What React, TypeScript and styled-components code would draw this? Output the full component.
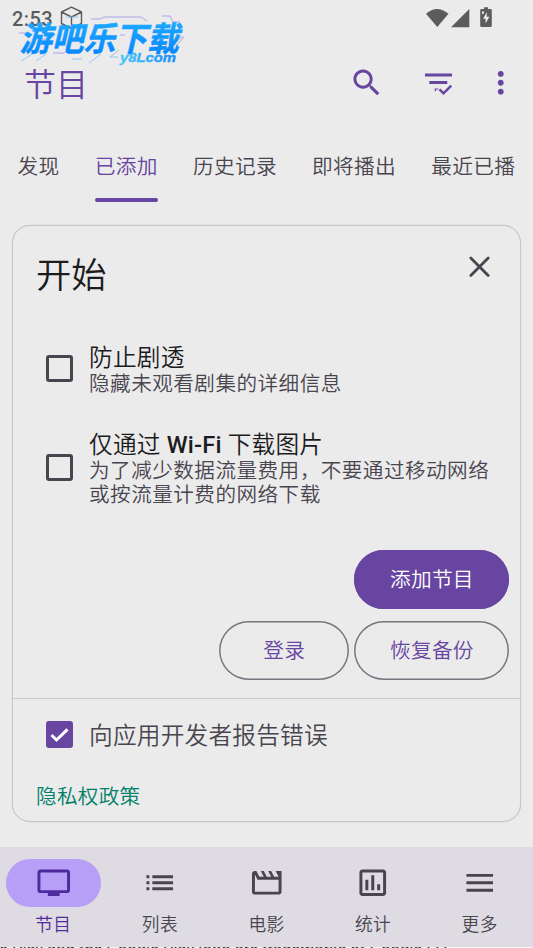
import React from 'react';
import styled, { createGlobalStyle } from 'styled-components';

const purple = '#6745a0';
const ink = '#1c1b1e';
const muted = '#49454f';
const surface = '#ebebeb';
const outline = '#c9c5d0';

const GlobalStyle = createGlobalStyle`
  * { box-sizing: border-box; }
  body {
    margin: 0;
    background: ${surface};
    font-family: Roboto, "Noto Sans CJK SC", sans-serif;
    font-weight: 350;
    overflow: hidden;
  }
  button { font: inherit; background: none; border: 0; padding: 0; }
`;

const Screen = styled.div`
  position: relative;
  display: flex;
  flex-direction: column;
  width: 533px;
  height: 948px;
  overflow: hidden;
  background: ${surface};
`;

const StatusBar = styled.header`
  display: flex;
  align-items: center;
  height: 36px;
  padding: 0 40px 0 12px;
  color: #5c5c5c;
`;

const Clock = styled.span`
  width: 48px;
  font-size: 20px;
  font-weight: 500;
  line-height: 24px;
  letter-spacing: 0.4px;
  padding-top: 1px;
`;

const StatusIcons = styled.div`
  display: flex;
  margin-left: auto;
`;

const AppBar = styled.div`
  display: flex;
  align-items: center;
  height: 94px;
  padding: 0 15px 0 24px;
  color: ${purple};
`;

const Title = styled.h1`
  margin: 0 auto 0 0;
  padding-top: 3px;
  font-size: 32px;
  font-weight: inherit;
  line-height: 44px;
`;

const IconButton = styled.button<{ $gap?: number }>`
  display: flex;
  margin-left: ${p => p.$gap ?? 0}px;
  color: inherit;
`;

const Tabs = styled.nav`
  display: flex;
  height: 72px;
  white-space: nowrap;
`;

const Tab = styled.button<{ $active?: boolean }>`
  display: flex;
  flex: none;
  flex-direction: column;
  justify-content: space-between;
  margin: 0 17.6px;
  padding-top: 23px;
  font-size: 20.7px;
  line-height: 28px;
  letter-spacing: 0.3px;
  color: ${p => (p.$active ? purple : muted)};
  &::after {
    content: '';
    width: 100%;
    height: 4.5px;
    border-radius: 3px;
    background: ${p => (p.$active ? purple : 'transparent')};
  }
`;

const Card = styled.section`
  display: flex;
  flex-direction: column;
  height: 597px;
  margin: 23px 12px 0;
  border: 1px solid ${outline};
  border-radius: 18px;
  background: ${surface};
  box-shadow: 0 0 0 0.2px ${outline};
`;

const CardHead = styled.div`
  display: flex;
  justify-content: space-between;
  height: 105px;
  padding: 23px 23px 0 23px;
  color: ${ink};
`;

const Heading = styled.h2`
  margin: 2px 0 0;
  font-size: 35.3px;
  font-weight: inherit;
  line-height: 50px;
`;

const CloseButton = styled(IconButton)`
  align-self: flex-start;
  color: ${muted};
`;

const Option = styled.label<{ $height: number }>`
  display: flex;
  align-items: center;
  height: ${p => p.$height}px;
  padding-left: 33px;
`;

const Box = styled.span<{ $checked?: boolean }>`
  display: flex;
  flex: none;
  width: 27px;
  height: 27px;
  margin-right: 16px;
  border: 3px solid ${p => (p.$checked ? purple : muted)};
  border-radius: 3px;
  background: ${p => (p.$checked ? purple : 'transparent')};
  svg { margin: -3px; }
`;

const OptionText = styled.span`
  display: flex;
  flex-direction: column;
  padding-top: 3px;
`;

const OptionTitle = styled.span`
  font-size: 23.7px;
  line-height: 28px;
  letter-spacing: 0.2px;
  color: ${ink};
`;

const OptionNote = styled.span`
  font-size: 20.6px;
  line-height: 24.5px;
  letter-spacing: 0.47px;
  color: ${muted};
  white-space: pre-line;
`;

const Latin = styled.b`
  font-weight: 500;
`;

const Actions = styled.div`
  display: grid;
  grid-template-columns: 130.5px 155px;
  grid-auto-rows: 59px;
  justify-content: end;
  gap: 12px 5px;
  margin: 21px 10.6px 0 0;
`;

const Pill = styled.button<{ $filled?: boolean }>`
  grid-column: ${p => (p.$filled ? 2 : 'auto')};
  border-radius: 30px;
  background: ${p => (p.$filled ? purple : 'transparent')};
  box-shadow: inset 0 0 0 1.5px ${p => (p.$filled ? purple : '#7a757f')};
  color: ${p => (p.$filled ? '#fff' : purple)};
  font-size: 20.7px;
  line-height: 28px;
  letter-spacing: 0.25px;
  padding-top: 1px;
`;

const CardFoot = styled.div`
  margin-top: 18px;
  border-top: 1px solid #cbc9ce;
`;

const ReportLabel = styled.span`
  padding-top: 2px;
  font-size: 23.7px;
  line-height: 30px;
  letter-spacing: 0.2px;
  color: ${muted};
`;

const PolicyLink = styled.a`
  display: block;
  padding: 12px 0 0 23px;
  font-size: 20.6px;
  line-height: 30px;
  letter-spacing: 0.3px;
  color: #008069;
`;

const BottomNav = styled.nav`
  display: grid;
  grid-template-columns: repeat(5, 1fr);
  height: 100px;
  margin-top: auto;
  background: #dedbe2;
`;

const NavItem = styled.button<{ $active?: boolean }>`
  display: flex;
  flex-direction: column;
  align-items: center;
  padding-top: 12px;
  color: ${p => (p.$active ? '#4f2a9c' : muted)};
`;

const NavIcon = styled.span<{ $active?: boolean }>`
  display: grid;
  place-items: center;
  width: 95px;
  height: 48px;
  border-radius: 24px;
  background: ${p => (p.$active ? '#b79ff8' : 'transparent')};
`;

const NavLabel = styled.span`
  margin-top: 6px;
  font-size: 17.7px;
  line-height: 24px;
  letter-spacing: 0.4px;
`;

const LegalStrip = styled.footer`
  flex: none;
  height: 1px;
  overflow: hidden;
  background: #f4f4f4;
  color: #333;
  font-size: 16.6px;
  font-weight: 400;
  line-height: 6px;
  white-space: nowrap;
  text-indent: -5px;
`;

const Watermark = styled.svg`
  position: absolute;
  left: 15px;
  top: 12px;
`;

const Glyph = ({ d, size = 35.5 }: { d: string; size?: number }) => (
  <svg width={size} height={size} viewBox="0 0 24 24" fill="currentColor" fillRule="evenodd">
    <path d={d} />
  </svg>
);

const icons = {
  search:
    'M15.5 14h-.79l-.28-.27C15.41 12.59 16 11.11 16 9.5 16 5.91 13.09 3 9.5 3S3 5.91 3 9.5 5.91 16 9.5 16c1.61 0 3.09-.59 4.23-1.57l.27.28v.79l5 4.99L20.49 19l-4.99-5zm-6 0C7.01 14 5 11.99 5 9.5S7.01 5 9.5 5 14 7.01 14 9.5 11.99 14 9.5 14z',
  more: 'M12 8c1.1 0 2-.9 2-2s-.9-2-2-2-2 .9-2 2 .9 2 2 2zm0 2c-1.1 0-2 .9-2 2s.9 2 2 2 2-.9 2-2-.9-2-2-2zm0 6c-1.1 0-2 .9-2 2s.9 2 2 2 2-.9 2-2-.9-2-2-2z',
  tv: 'M21 3H3c-1.1 0-2 .9-2 2v12c0 1.1.9 2 2 2h5v2h8v-2h5c1.1 0 2-.9 2-2V5c0-1.1-.9-2-2-2zm0 14H3V5h18v12z',
  list: 'M3 9h2V7H3v2zm0 4h2v-2H3v2zm0 4h2v-2H3v2zM7 7v2h14V7H7zm0 6h14v-2H7v2zm0 4h14v-2H7v2z',
  movie:
    'M4 6.47L5.76 10H20v8H4V6.47M22 4h-4l2 4h-3l-2-4h-2l2 4h-3l-2-4H8l2 4H7L5 4H4c-1.1 0-1.99.9-1.99 2L2 18c0 1.1.9 2 2 2h16c1.1 0 2-.9 2-2V4z',
  stats:
    'M19 3H5c-1.1 0-2 .9-2 2v14c0 1.1.9 2 2 2h14c1.1 0 2-.9 2-2V5c0-1.1-.9-2-2-2zm0 16H5V5h14v14zM7 10h2v7H7zM11 7h2v10h-2zM15 13h2v4h-2z',
  menu: 'M3 18h18v-2H3v2zm0-5h18v-2H3v2zm0-7v2h18V6H3z',
};

const FilterIcon = () => (
  <svg width="28" height="24" viewBox="0 0 28 24" fill="none" stroke="currentColor">
    <path d="M0 4h27M4.3 11.5h18" strokeWidth="2.9" />
    <path d="M14.5 18.3l4 4 7.7-7.6" strokeWidth="2.5" />
    <path d="M10.3 18h3M10.3 17.6v2.6" strokeWidth="1.2" />
  </svg>
);

const CubeIcon = () => (
  <svg width="24" height="26" viewBox="0 0 24 26" fill="none" stroke="currentColor" strokeWidth="1.4" strokeLinejoin="round">
    <path d="M11.5 2.2L21.5 7v11.5L11.5 23.5 1.5 18.5V7zM1.5 7l10 5 10-5M11.5 12v11.5" />
  </svg>
);

const SignalIcons = () => (
  <svg width="68" height="24" viewBox="0 0 68 24" fill="#5c5c5c">
    <path d="M1 7.8Q12 -1.8 23.5 7.8L12.3 21z" />
    <path d="M44.3 3v18.2H26z" />
    <path d="M59 1.2h4v1.7h2.4q1.4 0 1.4 1.4v15.4q0 1.4-1.4 1.4h-8.8q-1.4 0-1.4-1.4V4.3q0-1.4 1.4-1.4H59z" />
    <path d="M61.8 6.2l-3.8 6.5h2.6v4.8l3.8-6.8h-2.6zM57 5.4h2v2.3h-2z" fill="#ebebeb" />
  </svg>
);

const Brand = () => (
  <Watermark width="175" height="56" viewBox="0 0 175 56">
    <defs>
      <linearGradient id="brand" x1="0" y1="0" x2="0" y2="1">
        <stop offset="0" stopColor="#25b2ff" />
        <stop offset="1" stopColor="#0080ff" />
      </linearGradient>
      <linearGradient id="site" x1="0" y1="0" x2="1" y2="0">
        <stop offset="0" stopColor="#4bc9f5" />
        <stop offset="1" stopColor="#168cfa" />
      </linearGradient>
    </defs>
    <g fill="none" strokeWidth=".8">
      <path stroke="#9b90e5" d="M76 7h9l4-2h37l6 4M147 4h8l3 6h7M169 25l-8 9M105 23h5M4 21h7M26 27h5M38 41h11l5-4M161 30l7-6" />
      <path stroke="#80bdf0" d="M6 49l13-8 7-1M21 49l10-7M74 51l12-9M104 38l-9 7h8M143 34l9 2h8M57 47h10M51 5h12M112 41h9" />
    </g>
    <g transform="translate(7 0) skewX(-13)" fontFamily="'Noto Sans CJK SC', sans-serif" fontWeight="700">
      <text x="7" y="39.5" fontSize="33.5" textLength="159" lengthAdjust="spacingAndGlyphs" fill="url(#brand)" stroke="url(#brand)" strokeWidth=".5">
        游吧乐下载
      </text>
    </g>
    <text x="105" y="49.5" fontFamily="'Liberation Sans', sans-serif" fontSize="13.5" fontWeight="700" fontStyle="italic" textLength="56" lengthAdjust="spacingAndGlyphs" fill="url(#site)" stroke="url(#site)" strokeWidth=".4">
      y8Lcom
    </text>
  </Watermark>
);

const tabs = ['发现', '已添加', '历史记录', '即将播出', '最近已播'];
const destinations = [
  { label: '节目', icon: icons.tv },
  { label: '列表', icon: icons.list },
  { label: '电影', icon: icons.movie },
  { label: '统计', icon: icons.stats },
  { label: '更多', icon: icons.menu },
];

export default function App() {
  return (
    <Screen>
      <GlobalStyle />
      <StatusBar>
        <Clock>2:53</Clock>
        <CubeIcon />
        <StatusIcons>
          <SignalIcons />
        </StatusIcons>
      </StatusBar>
      <AppBar>
        <Title>节目</Title>
        <IconButton aria-label="搜索"><Glyph d={icons.search} /></IconButton>
        <IconButton aria-label="筛选" $gap={40}><FilterIcon /></IconButton>
        <IconButton aria-label="更多选项" $gap={30}><Glyph d={icons.more} /></IconButton>
      </AppBar>
      <Tabs>
        {tabs.map(name => (
          <Tab key={name} $active={name === '已添加'}>{name}</Tab>
        ))}
      </Tabs>
      <Card>
        <CardHead>
          <Heading>开始</Heading>
          <CloseButton aria-label="关闭">
            <svg width="35" height="35" viewBox="0 0 35 35" fill="none" stroke="currentColor" strokeWidth="2.8" strokeLinecap="round">
              <path d="M8.8 9l17.4 17.4M26.2 9L8.8 26.4" />
            </svg>
          </CloseButton>
        </CardHead>
        <Option $height={75}>
          <Box />
          <OptionText>
            <OptionTitle>防止剧透</OptionTitle>
            <OptionNote>隐藏未观看剧集的详细信息</OptionNote>
          </OptionText>
        </Option>
        <Option $height={123}>
          <Box />
          <OptionText>
            <OptionTitle>仅通过 <Latin>Wi-Fi</Latin> 下载图片</OptionTitle>
            <OptionNote>{'为了减少数据流量费用，不要通过移动网络\n或按流量计费的网络下载'}</OptionNote>
          </OptionText>
        </Option>
        <Actions>
          <Pill $filled>添加节目</Pill>
          <Pill>登录</Pill>
          <Pill>恢复备份</Pill>
        </Actions>
        <CardFoot>
          <Option $height={71}>
            <Box $checked>
              <svg width="27" height="27" viewBox="0 0 27 27" fill="none" stroke="#fff" strokeWidth="3">
                <path d="M5.5 14l5 5L21.5 8.3" />
              </svg>
            </Box>
            <ReportLabel>向应用开发者报告错误</ReportLabel>
          </Option>
          <PolicyLink>隐私权政策</PolicyLink>
        </CardFoot>
      </Card>
      <BottomNav>
        {destinations.map(({ label, icon }, i) => (
          <NavItem key={label} $active={i === 0}>
            <NavIcon $active={i === 0}><Glyph d={icon} /></NavIcon>
            <NavLabel>{label}</NavLabel>
          </NavItem>
        ))}
      </BottomNav>
      <LegalStrip>le Play and the Google Play logo are trademarks of Google LLC.</LegalStrip>
      <Brand />
    </Screen>
  );
}
